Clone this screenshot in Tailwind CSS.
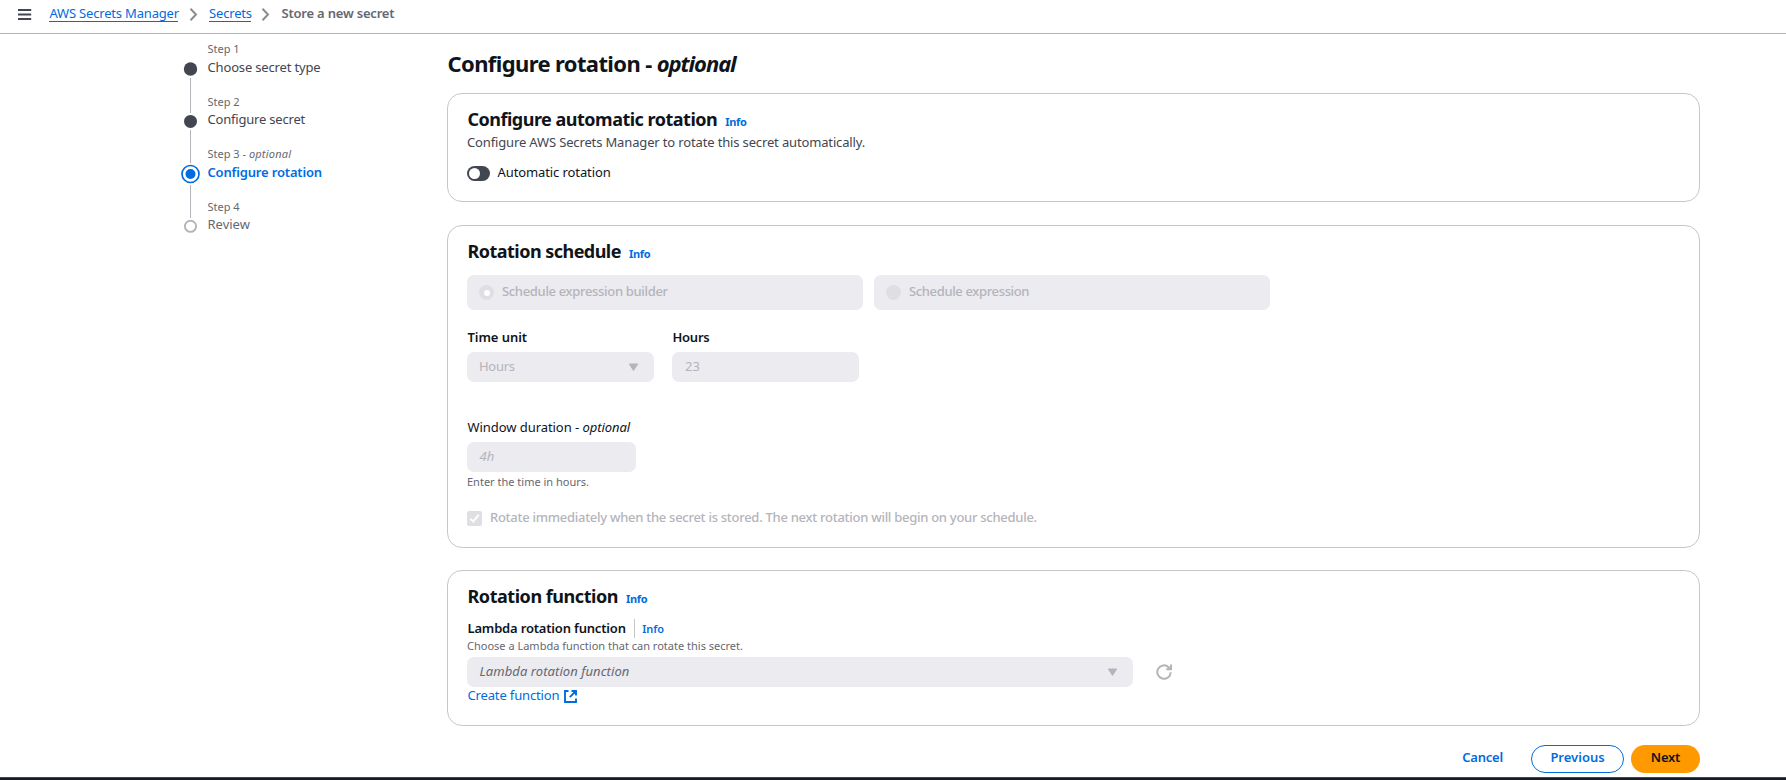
<!DOCTYPE html>
<html lang="en">
<head>
<meta charset="utf-8">
<title>Store a new secret</title>
<script src="https://cdn.jsdelivr.net/npm/@tailwindcss/browser@4"></script>
</head>
<body class="flex h-[780px] flex-col overflow-hidden bg-white font-['Noto_Sans',sans-serif] text-[13px] leading-5 whitespace-nowrap text-[#0f141a]">

<header class="flex h-[34px] shrink-0 items-start border-b border-[#b4b4b8] pt-[3px] pl-[17px]">
  <svg class="mt-[4px] h-4 w-4" viewBox="0 0 16 16" fill="none" stroke="#424650" stroke-width="1.8"><path d="M1 3h13.2M1 7.5h13.2M1 12h13.2"/></svg>
  <nav class="flex pl-[16.4px]">
    <a class="h-[18.5px] w-[129px] border-b border-[#006ce0] tracking-[-0.18px] text-[#006ce0]">AWS Secrets Manager</a>
    <svg class="mt-[4px] ml-[10.6px] h-[15px] w-[10px]" viewBox="0 0 10 15" fill="none" stroke="#8c8c94" stroke-width="2"><path d="M1.5 1.8 7 7.5 1.5 13.2"/></svg>
    <a class="ml-[10px] h-[18.5px] w-[42.5px] border-b border-[#006ce0] tracking-[-0.16px] text-[#006ce0]">Secrets</a>
    <svg class="mt-[4px] ml-[10px] h-[15px] w-[10px]" viewBox="0 0 10 15" fill="none" stroke="#8c8c94" stroke-width="2"><path d="M1.5 1.8 7 7.5 1.5 13.2"/></svg>
    <span class="ml-[10px] font-semibold tracking-[-0.2px] text-[#656871]">Store a new secret</span>
  </nav>
</header>

<div class="flex min-h-0 flex-1">
  <aside class="flex w-[447px] shrink-0 pt-[7px] pl-[180px]">
    <svg class="h-[200px] w-[21px] shrink-0" viewBox="0 0 21 200" fill="none">
      <path d="M10.5 37v35M10.5 89v33M10.5 144v33" stroke="#b4b4bb"/>
      <circle cx="10.5" cy="28" r="6.7" fill="#424650"/>
      <circle cx="10.5" cy="80.4" r="6.5" fill="#424650"/>
      <circle cx="10.5" cy="133" r="8.5" stroke="#006ce0" stroke-width="1.7"/>
      <circle cx="10.5" cy="133" r="5" fill="#006ce0"/>
      <circle cx="10.5" cy="185.3" r="5.6" stroke="#b4b4bb" stroke-width="1.9"/>
    </svg>
    <ol class="flex flex-col pl-[6.5px] text-[#424650]">
      <li class="h-[53px]"><div class="text-[11px] leading-4 text-[#656871]">Step 1</div><div class="tracking-[-0.16px]">Choose secret type</div></li>
      <li class="h-[52px]"><div class="text-[11px] leading-4 text-[#656871]">Step 2</div><div class="-mt-px tracking-[-0.2px]">Configure secret</div></li>
      <li class="h-[53px]"><div class="text-[11px] leading-4 text-[#656871]">Step 3 - <i class="tracking-[0.2px]">optional</i></div><div class="font-semibold tracking-[-0.17px] text-[#006ce0]">Configure rotation</div></li>
      <li><div class="text-[11px] leading-4 text-[#656871]">Step 4</div><div class="-mt-px text-[#656871]">Review</div></li>
    </ol>
  </aside>

  <main class="flex w-[1253px] flex-col pt-[15px]">
    <h1 class="pl-[0.5px] text-[22px] leading-7 font-bold tracking-[-0.62px]">Configure rotation - <i class="tracking-[-1.05px]">optional</i></h1>

    <section class="mt-4 h-[109px] rounded-[15px] border border-[#c6c6cd] pt-[13px] pl-[19px]">
      <h2 class="flex items-baseline gap-2 pl-[0.5px] text-lg leading-6 font-bold tracking-[-0.5px]">Configure automatic rotation<a class="text-[11px] leading-4 tracking-[-0.3px] text-[#006ce0]">Info</a></h2>
      <p class="mt-px tracking-[-0.145px] text-[#424650]">Configure AWS Secrets Manager to rotate this secret automatically.</p>
      <label class="mt-[10px] flex tracking-[-0.1px]">
        <span class="mt-[4px] flex h-[15px] w-[23px] items-center rounded-full bg-[#424650] pl-[2px]"><span class="h-[11px] w-[11px] rounded-full bg-white"></span></span>
        <span class="pl-[7.5px]">Automatic rotation</span>
      </label>
    </section>

    <section class="mt-[23px] h-[323px] rounded-[15px] border border-[#c6c6cd] pt-[13px] pl-[19px]">
      <h2 class="flex items-baseline gap-2 pl-[0.5px] text-lg leading-6 font-bold tracking-[-0.53px]">Rotation schedule<a class="text-[11px] leading-4 tracking-[-0.3px] text-[#006ce0]">Info</a></h2>
      <div class="mt-[12px] flex gap-[11px] font-medium text-[#b4b4bb]">
        <div class="flex h-[35px] w-[396px] rounded-[7px] bg-[#ebebf0] pt-[7px] pl-3"><span class="mt-[3px] flex h-[15px] w-[15px] items-center justify-center rounded-full bg-[#dedee3]"><span class="h-[6px] w-[6px] rounded-full bg-white"></span></span><span class="-mt-px pl-2 tracking-[-0.33px]">Schedule expression builder</span></div>
        <div class="flex h-[35px] w-[396px] rounded-[7px] bg-[#ebebf0] pt-[7px] pl-3"><span class="mt-[3px] h-[15px] w-[15px] rounded-full bg-[#dedee3]"></span><span class="-mt-px pl-2 tracking-[-0.36px]">Schedule expression</span></div>
      </div>
      <div class="mt-[17px] flex gap-[18px]">
        <div class="w-[187px]">
          <div class="pl-[0.5px] font-semibold tracking-[-0.07px]">Time unit</div>
          <div class="mt-[5px] flex h-[30px] items-center justify-between rounded-[7px] bg-[#ebebf0] pr-[15px] pb-px pl-3 text-[#b4b4bb]"><span class="pb-[2px] tracking-[-0.3px]">Hours</span><svg class="mt-px h-[9px] w-[11px]" viewBox="0 0 11 9"><path d="M1.3 1h8.4L5.5 7.4Z" fill="#b4b4bb" stroke="#b4b4bb" stroke-linejoin="round"/></svg></div>
        </div>
        <div class="w-[187px]">
          <div class="pl-[0.5px] font-semibold tracking-[-0.24px]">Hours</div>
          <div class="mt-[5px] flex h-[30px] items-center rounded-[7px] bg-[#ebebf0] pb-[2px] pl-[13px] text-[#b4b4bb]">23</div>
        </div>
      </div>
      <div class="mt-[35px] pl-[0.5px] tracking-[-0.06px]">Window duration - <i>optional</i></div>
      <div class="mt-[5px] flex h-[30px] w-[169px] items-center rounded-[7px] bg-[#ebebf0] pb-[3px] pl-[12.5px] text-[#b4b4bb] italic">4h</div>
      <div class="mt-[2px] text-[11px] leading-4 text-[#656871]">Enter the time in hours.</div>
      <label class="mt-[17px] flex text-[#b4b4bb]">
        <svg class="mt-[4px] h-[15px] w-[15px]" viewBox="0 0 15 15"><rect width="15" height="15" rx="2" fill="#dedee3"/><path d="m3.2 7.6 3 3 5.6-7" fill="none" stroke="#fff" stroke-width="2"/></svg>
        <span class="pl-2 font-medium tracking-[-0.275px]">Rotate immediately when the secret is stored. The next rotation will begin on your schedule.</span>
      </label>
    </section>

    <section class="mt-[22px] h-[156px] rounded-[15px] border border-[#c6c6cd] pt-[13px] pl-[19px]">
      <h2 class="flex items-baseline gap-2 pl-[0.5px] text-lg leading-6 font-bold tracking-[-0.46px]">Rotation function<a class="text-[11px] leading-4 tracking-[-0.3px] text-[#006ce0]">Info</a></h2>
      <div class="mt-[10px] flex items-baseline font-semibold"><span class="pl-[0.5px] tracking-[-0.18px]">Lambda rotation function</span><span class="ml-2 h-[19px] w-px self-end bg-[#c6c6cd]"></span><a class="ml-[7.5px] text-[11px] leading-4 tracking-[-0.1px] text-[#006ce0]">Info</a></div>
      <div class="text-[11px] leading-4 text-[#656871]">Choose a Lambda function that can rotate this secret.</div>
      <div class="mt-[3px] flex items-center">
        <div class="flex h-[30px] w-[666px] items-center justify-between rounded-[7px] bg-[#ebebf0] pr-[15px] pb-px pl-[12.5px]"><i class="pb-[2px] tracking-[0.07px] text-[#656871]">Lambda rotation function</i><svg class="mt-[2px] h-[9px] w-[11px]" viewBox="0 0 11 9"><path d="M1.3 1h8.4L5.5 7.4Z" fill="#b4b4bb" stroke="#b4b4bb" stroke-linejoin="round"/></svg></div>
        <svg class="-mt-px ml-[22.5px] h-4 w-4" viewBox="0 0 16 16" fill="none" stroke="#b4b4bb" stroke-width="2"><path d="M14.7 8.2A6.7 6.7 0 1 1 12.6 3.2L14.4 5M15 .5v4.8h-4.8"/></svg>
      </div>
      <a class="flex leading-4 text-[#006ce0]"><span class="pl-[0.5px] tracking-[-0.15px]">Create function</span><svg class="mt-[3px] ml-[5px] h-[13px] w-[13px]" viewBox="0 0 13 13" fill="none" stroke="#006ce0" stroke-width="1.9"><path d="M4.5 1H1v11h11V8.6M7.5 1H12v4.5M12 1 5.8 7.2"/></svg></a>
    </section>

    <div class="mt-[19px] flex justify-end font-semibold text-[#006ce0]">
      <a class="mr-7 pt-[2px] tracking-[-0.2px]">Cancel</a>
      <button class="flex h-7 w-[93px] justify-center rounded-full border-[1.5px] border-[#006ce0] pt-px">Previous</button>
      <button class="ml-[7px] flex h-7 w-[69px] justify-center rounded-full bg-[#ff9900] pt-[2px] tracking-[-0.2px] text-[#0f141a]">Next</button>
    </div>
  </main>
</div>
<footer class="h-[3px] shrink-0 border-t border-[#424650] bg-[#161d26]"></footer>
</body>
</html>
